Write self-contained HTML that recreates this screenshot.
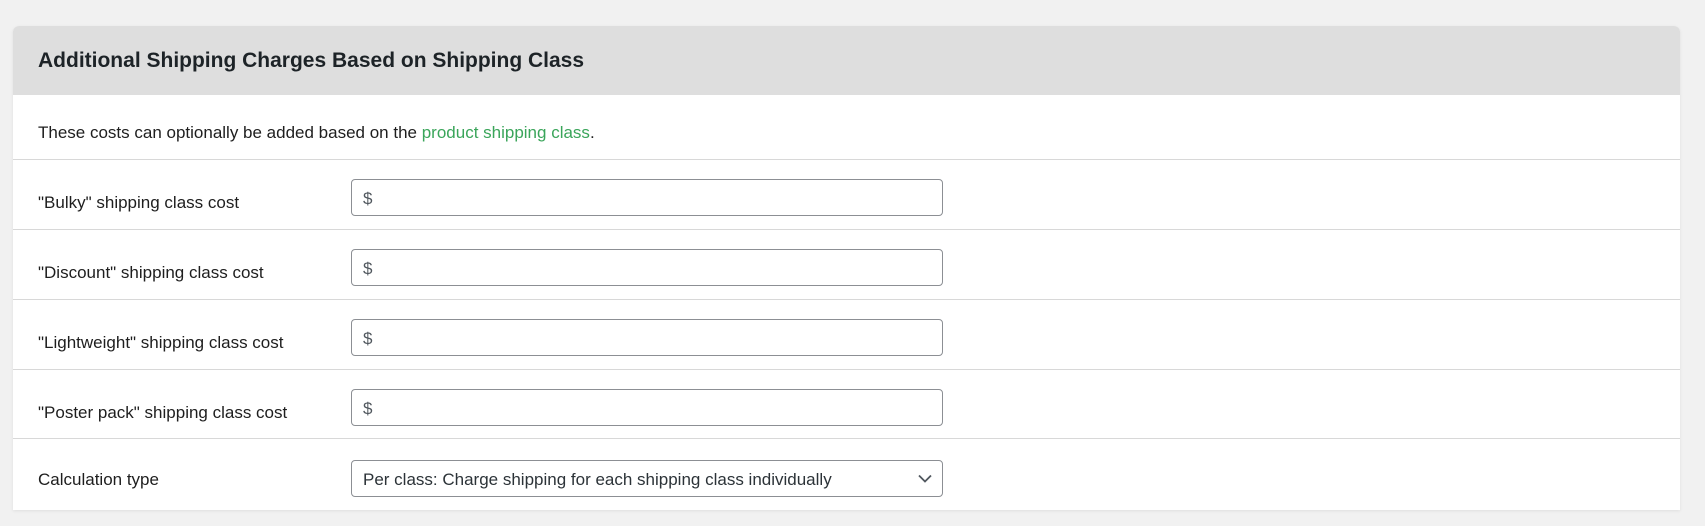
<!DOCTYPE html>
<html><head><style>
body{margin:0;background:#f1f1f1;width:1705px;height:526px;overflow:hidden;font-family:"Liberation Sans",sans-serif;color:#1e1e1e}
.panel{position:absolute;left:13px;top:26px;width:1667px;height:484px;background:#fff;border-radius:6px 6px 0 0;box-shadow:0 1px 3px rgba(0,0,0,.08);overflow:hidden}
.hd{height:69px;background:#dedede;display:flex;align-items:center;padding-left:25px;font-size:21px;font-weight:bold;color:#1d2327}
.desc{height:65px;display:flex;align-items:center;padding-left:25px;padding-top:12px;font-size:17px;border-bottom:1px solid #d8d8d8;box-sizing:border-box}
.desc a{color:#3aa55a;text-decoration:none}
.row{height:70px;border-bottom:1px solid #d8d8d8;box-sizing:border-box;position:relative;font-size:17px}
.row .l{position:absolute;left:25px;top:33px}
.inp{position:absolute;left:338px;top:19px;width:592px;height:37px;border:1px solid #8c8f94;border-radius:4px;box-sizing:border-box;color:#50575e;font-size:17px;padding:9px 11px}
.row.last{border-bottom:none}
</style></head><body>
<div class="panel">
<div class="hd">Additional Shipping Charges Based on Shipping Class</div>
<div class="desc"><span>These costs can optionally be added based on the <a>product shipping class</a>.</span></div>
<div class="row"><div class="l">"Bulky" shipping class cost</div><div class="inp">$</div></div>
<div class="row"><div class="l">"Discount" shipping class cost</div><div class="inp">$</div></div>
<div class="row"><div class="l">"Lightweight" shipping class cost</div><div class="inp">$</div></div>
<div class="row" style="height:69px"><div class="l">"Poster pack" shipping class cost</div><div class="inp">$</div></div>
<div class="row last"><div class="l" style="top:31px">Calculation type</div><div class="inp" style="color:#2c3338;top:21px">Per class: Charge shipping for each shipping class individually
<svg style="position:absolute;right:10px;top:13px" width="14" height="9" viewBox="0 0 14 9"><path d="M1 1.5l6 6 6-6" fill="none" stroke="#50575e" stroke-width="1.8"/></svg></div></div>
</div>
</body></html>
